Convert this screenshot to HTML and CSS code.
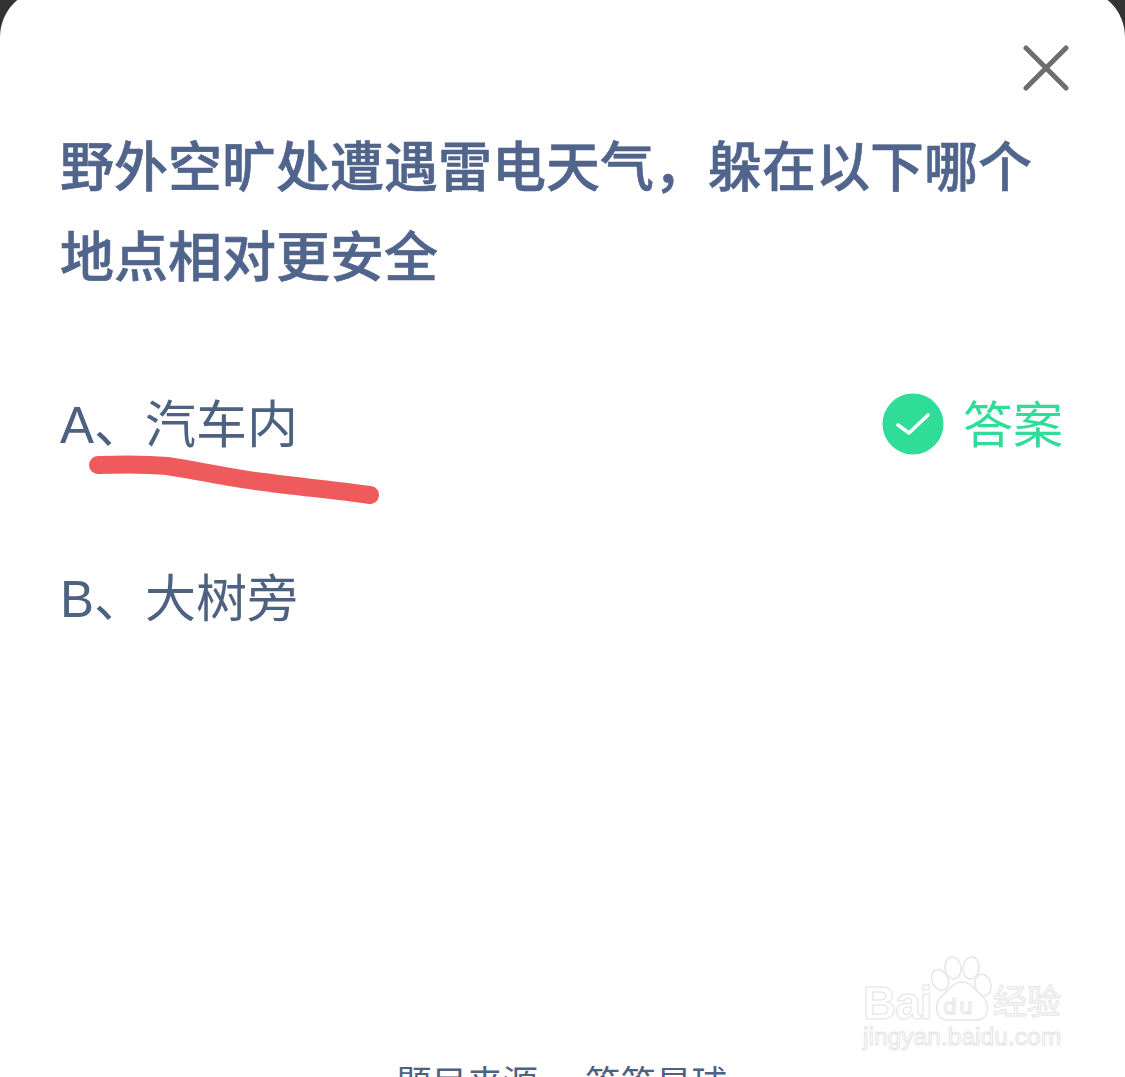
FILE: index.html
```html
<!DOCTYPE html>
<html lang="zh-CN">
<head>
    <meta charset="UTF-8">
    <meta name="viewport" content="width=device-width, initial-scale=1.0">
    <title>答答星球</title>
    <link rel="stylesheet" href="styles.css">
</head>
<body>
    <div class="card">
        <svg class="close" viewBox="0 0 46 46" width="46" height="46">
            <path d="M3 3 L43 43 M43 3 L3 43" stroke="#6e6e6e" stroke-width="5" stroke-linecap="round" fill="none"/>
        </svg>
        <h1 class="question">野外空旷处遭遇雷电天气，躲在以下哪个地点相对更安全</h1>
        <div class="options">
            <div class="option">
                <span>A、汽车内</span>
                <span class="answer">
                    <svg class="check" viewBox="0 0 62 62" width="62" height="62">
                        <circle cx="31" cy="31" r="30.5" fill="#2fdc98"/>
                        <path d="M16 32 L27 40 L46 22" stroke="#fff" stroke-width="3.5" stroke-linecap="round" stroke-linejoin="round" fill="none"/>
                    </svg>
                    答案
                </span>
            </div>
            <div class="option">
                <span>B、大树旁</span>
            </div>
        </div>
        <div class="source">题目来源<span class="source-gap"></span>答答星球</div>

        <!-- hand drawn line under the right answer -->
        <svg class="scribble" viewBox="0 0 300 60" width="300" height="60">
            <path d="M13 13 C40 12 62 12 82 14 C115 19 150 27 178 30 C215 35 250 38 285 43" stroke="#ef5a5c" stroke-width="18" stroke-linecap="round" fill="none"/>
        </svg>

        <div class="watermark">
            <svg class="paw" viewBox="0 0 64 68" width="64" height="68">
                <g fill="#fff" stroke="#e6e6e6" stroke-width="1.5">
                    <ellipse cx="10" cy="25" rx="8" ry="11" transform="rotate(-25 10 25)"/>
                    <ellipse cx="23" cy="13" rx="8" ry="11" transform="rotate(-8 23 13)"/>
                    <ellipse cx="41" cy="13" rx="8" ry="11" transform="rotate(8 41 13)"/>
                    <ellipse cx="53" cy="30" rx="8" ry="11" transform="rotate(-15 53 30)"/>
                    <path d="M32 27 C22 27 19 36 12 41 C4 47 4 65 18 65 L46 65 C60 65 60 47 52 41 C45 36 42 27 32 27 Z"/>
                </g>
            </svg>
            <span class="wm-bai">Bai</span>
            <span class="wm-du">du</span>
            <span class="wm-jy">经验</span>
            <span class="wm-url">jingyan.baidu.com</span>
        </div>
    </div>
</body>
</html>
```

FILE: styles.css
```css
html, body {
    height: 100%;
}
body {
    margin: 0;
    background-color: #333;
    overflow: hidden;
    font-family: "Liberation Sans", "Noto Sans CJK SC", sans-serif;
}
.card {
    position: relative;
    height: calc(100% + 11px);
    margin-top: -11px;
    box-sizing: border-box;
    padding: 134px 62px 0 60px;
    background-color: #fff;
    border-radius: 48px 48px 0 0;
    color: #4f6285;
}
.close {
    position: absolute;
    top: 56px;
    right: 56px;
}
.question {
    margin: 0;
    font-size: 54px;
    line-height: 90px;
    font-weight: 500;
    -webkit-text-stroke: 0.6px #50648c;
    color: #50648c;
}
.options {
    margin-top: 76px;
    display: flex;
    flex-direction: column;
    gap: 90px;
}
.option {
    display: flex;
    justify-content: space-between;
    align-items: center;
    height: 84px;
    font-size: 51px;
    color: #4d6180;
}
.answer {
    display: flex;
    align-items: center;
    gap: 19px;
    font-size: 50px;
    color: #2fdc98;
}
.check {
    margin-top: 6px;
}
.source {
    margin-top: 422px;
    display: flex;
    justify-content: center;
    font-size: 35.5px;
    line-height: 50px;
    color: #4d6180;
}
.source-gap {
    width: 47px;
}
.scribble {
    position: absolute;
    left: 85px;
    top: 463px;
}
.watermark {
    position: absolute;
    left: 862px;
    top: 966px;
    width: 205px;
    height: 100px;
    color: #fff;
    -webkit-text-stroke: 1px #e4e4e4;
}
.paw {
    position: absolute;
    left: 68px;
    top: 0;
}
.wm-bai, .wm-du, .wm-jy, .wm-url {
    position: absolute;
    white-space: nowrap;
}
.wm-bai {
    left: 1px;
    top: 31px;
    font-size: 46px;
    line-height: 34px;
    font-weight: 700;
    letter-spacing: -1px;
}
.wm-du {
    left: 81px;
    top: 41px;
    font-family: "DejaVu Sans", sans-serif;
    font-size: 22px;
    line-height: 22px;
    letter-spacing: 2px;
}
.wm-jy {
    left: 131px;
    top: 30px;
    font-size: 34px;
    line-height: 34px;
}
.wm-url {
    left: 1px;
    top: 68px;
    font-size: 24.6px;
    line-height: 28px;
}
```
